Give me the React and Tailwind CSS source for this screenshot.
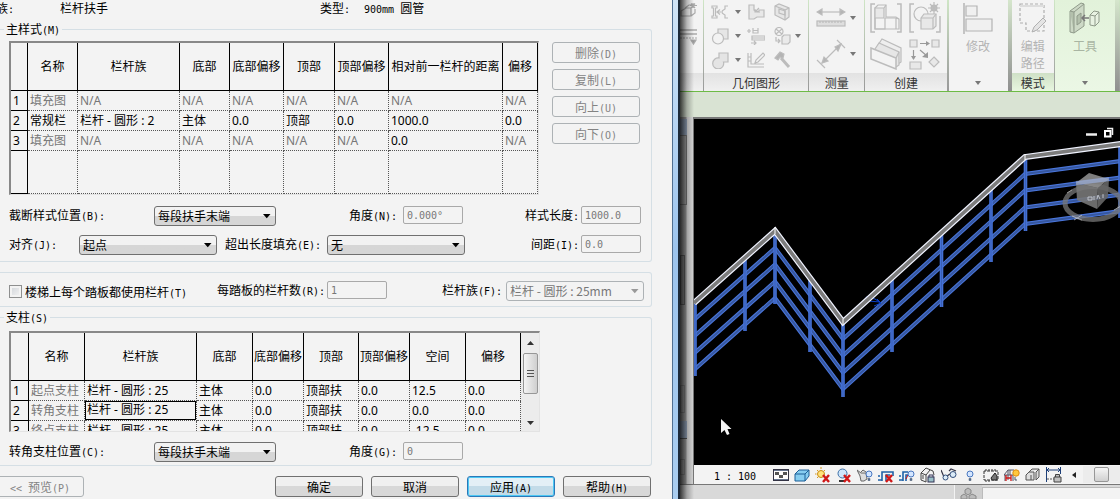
import { useState } from "react";

const balusterCols = [
  { title: "名称", width: "w-[50px]" },
  { title: "栏杆族", width: "w-[102px]" },
  { title: "底部", width: "w-[50px]" },
  { title: "底部偏移", width: "w-[54px]" },
  { title: "顶部", width: "w-[51px]" },
  { title: "顶部偏移", width: "w-[54px]" },
  { title: "相对前一栏杆的距离", width: "w-[114px]" },
  { title: "偏移", width: "w-[35px]" },
];

const balusterRows = [
  ["填充图", "N/A", "N/A", "N/A", "N/A", "N/A", "N/A", "N/A"],
  ["常规栏", "栏杆 - 圆形 : 2", "主体", "0.0", "顶部", "0.0", "1000.0", "0.0"],
  ["填充图", "N/A", "N/A", "N/A", "N/A", "N/A", "0.0", "N/A"],
];

const postCols = [
  { title: "名称", width: "w-[56px]" },
  { title: "栏杆族", width: "w-[112px]" },
  { title: "底部", width: "w-[56px]" },
  { title: "底部偏移", width: "w-[51px]" },
  { title: "顶部", width: "w-[55px]" },
  { title: "顶部偏移", width: "w-[51px]" },
  { title: "空间", width: "w-[56px]" },
  { title: "偏移", width: "w-[55px]" },
];

const postRows = [
  ["起点支柱", "栏杆 - 圆形 : 25", "主体", "0.0", "顶部扶", "0.0", "12.5", "0.0"],
  ["转角支柱", "栏杆 - 圆形 : 25", "主体", "0.0", "顶部扶", "0.0", "0.0", "0.0"],
  ["终点支柱", "栏杆 - 圆形 : 25", "主体", "0.0", "顶部扶", "0.0", "-12.5", "0.0"],
];

// Latin runs are set in a half-width mono face next to the 12px Chinese
function T({ children }) {
  return children.split(/([\x20-\x7e]+)/).map((part, i) =>
    i % 2 ? (
      <span key={i} className="font-['DejaVu_Sans_Mono',monospace] text-[10px] leading-[0] whitespace-pre">
        {part}
      </span>
    ) : (
      part
    )
  );
}

function Grid({ label, cols, rows, numWidth, muted, selected, filler }) {
  return (
    <table
      aria-label={label}
      className="table-fixed border-separate border-spacing-0 shrink-0 w-0 font-['Noto_Sans','Noto_Sans_CJK_SC',sans-serif] text-xs leading-4 text-black whitespace-nowrap"
    >
      <thead>
        <tr className="h-12">
          <td className={`${numWidth} border-r border-b border-black`}></td>
          {cols.map((c) => (
            <th key={c.title} scope="col" className={`${c.width} p-0 font-normal text-center border-r border-b border-black`}>
              {c.title}
            </th>
          ))}
        </tr>
      </thead>
      <tbody>
        {rows.map((row, r) => (
          <tr key={r} className="h-5">
            <th scope="row" className="p-0 pl-0.5 text-left font-normal border-r border-b border-black">
              {r + 1}
            </th>
            {row.map((text, c) => (
              <td
                key={c}
                className={`p-0 overflow-hidden border-r border-b border-dotted border-[#555] ${muted(text, c) ? "text-[#777]" : ""}`}
              >
                {selected === `${r}-${c}` ? (
                  <div className="h-[19px] pl-px border border-black">{text}</div>
                ) : (
                  <div className="pl-0.5">{text}</div>
                )}
              </td>
            ))}
          </tr>
        ))}
        {filler && (
          <tr className="h-[43px]">
            <td className="border-r border-b border-black"></td>
            {cols.map((c) => (
              <td key={c.title} className="border-r border-b border-dotted border-[#555]"></td>
            ))}
          </tr>
        )}
      </tbody>
    </table>
  );
}

function Select({ id, options, className, disabled, label }) {
  return (
    <div className={`relative ${className}`}>
      <select
        id={id}
        aria-label={label}
        disabled={disabled}
        className="appearance-none block w-full h-5 pl-[3px] pr-5 text-xs leading-4 rounded-[3px] border border-[#707070] text-black bg-linear-to-b from-[#f2f2f2] from-50% to-[#d6d6d6] to-50% disabled:border-[#adb2b5] disabled:text-[#777] disabled:bg-none disabled:bg-[#f3f3f3]"
      >
        {options.map((o) => (
          <option key={o}>{o}</option>
        ))}
      </select>
      <svg
        viewBox="0 0 8 5"
        className={`absolute right-[5px] top-2 w-2 h-[5px] pointer-events-none ${disabled ? "fill-[#999]" : "fill-black"}`}
      >
        <path d="M0 0H7.5L3.75 4.2Z" />
      </svg>
    </div>
  );
}

function Field({ id, value }) {
  return (
    <input
      id={id}
      type="text"
      disabled
      defaultValue={value}
      className="w-[60px] h-[18px] px-[3px] rounded-[2px] border border-[#a9a9a9] bg-[#f3f3f3] font-['DejaVu_Sans_Mono',monospace] text-[10px] leading-4 text-[#777]"
    />
  );
}

function Button({ children, disabled, primary, className = "" }) {
  const look = disabled
    ? "border-[#adb2b5] text-[#838383]"
    : primary
    ? "border-[#2c78b8] bg-linear-to-b from-[#e3eff6] from-50% to-[#c3dbe8] to-50% shadow-[inset_0_0_0_1px_#4cc8f4]"
    : "border-[#707070] bg-linear-to-b from-[#f0f0f0] from-50% to-[#d8d8d8] to-50%";
  return (
    <button
      type="button"
      disabled={disabled}
      className={`w-[88px] h-[21px] shrink-0 rounded-[3px] border text-xs leading-4 whitespace-nowrap ${look} ${className}`}
    >
      <T>{children}</T>
    </button>
  );
}

const group = "min-w-0 mr-5 border border-l-0 border-[#d5dfe5] rounded-r-[3px]";
const legend = "ml-1 px-0.5 text-xs leading-4";
const formRow = "flex pl-[9px] leading-[18px]";
const sunken = "ml-[9px] border-2 border-r border-b border-t-[#888] border-l-[#888] border-r-[#e3e3e3] border-b-[#e3e3e3]";

function BalusterDialog() {
  const [perTread, setPerTread] = useState(false);

  return (
    <form className="w-3/5 shrink-0 overflow-hidden bg-[#f3f3f3] text-black text-xs leading-4">
      <div className="flex h-[21px] overflow-hidden">
        <div className="w-[60px] -indent-1 shrink-0"><T>族:</T></div>
        <div className="w-[260px] shrink-0">栏杆扶手</div>
        <div className="w-11 shrink-0"><T>类型:</T></div>
        <div><T>900mm 圆管</T></div>
      </div>

      <fieldset className={`${group} pb-1.5`}>
        <legend className={legend}><T>主样式(M)</T></legend>
        <div className="flex pt-1">
          <div className={sunken}>
            <Grid
              label="主样式"
              cols={balusterCols}
              rows={balusterRows}
              numWidth="w-[17px]"
              muted={(text) => text === "N/A" || text === "填充图"}
              filler
            />
          </div>
          <div className="flex flex-col gap-1.5 ml-[13px] pt-px">
            <Button disabled>删除(D)</Button>
            <Button disabled>复制(L)</Button>
            <Button disabled>向上(U)</Button>
            <Button disabled>向下(O)</Button>
          </div>
        </div>
        <div className={`${formRow} mt-[11px]`}>
          <label htmlFor="break" className="w-[145px]"><T>截断样式位置(B):</T></label>
          <Select id="break" className="w-[122px]" options={["每段扶手末端", "角度大于", "从不"]} />
          <label htmlFor="angleN" className="w-[127px] pr-1.5 text-right"><T>角度(N):</T></label>
          <Field id="angleN" value="0.000°" />
          <label htmlFor="length" className="w-[118px] pr-0.5 text-right"><T>样式长度:</T></label>
          <Field id="length" value="1000.0" />
        </div>
        <div className={`${formRow} mt-[9px]`}>
          <label htmlFor="justify" className="w-[70px]"><T>对齐(J):</T></label>
          <Select id="justify" className="w-[138px]" options={["起点", "终点", "中心"]} />
          <label htmlFor="excess" className="w-[110px] pr-1.5 text-right"><T>超出长度填充(E):</T></label>
          <Select id="excess" className="w-[138px]" options={["无", "截断样式"]} />
          <label htmlFor="spacing" className="w-[116px] pr-0.5 text-right"><T>间距(I):</T></label>
          <Field id="spacing" value="0.0" />
        </div>
      </fieldset>

      <div className={`${group} ${formRow} mt-2.5 pt-2 pb-[5px]`}>
        <input
          id="perTread"
          type="checkbox"
          checked={perTread}
          onChange={(e) => setPerTread(e.target.checked)}
          className="appearance-none w-[13px] h-[13px] mt-1 border border-[#8e8f8f] bg-linear-to-br from-[#cfd3d8] to-[#f6f6f6] shadow-[inset_0_0_0_2px_#f3f3f3] checked:bg-none checked:bg-[#4b6a9b]"
        />
        <label htmlFor="perTread" className="w-[180px] ml-[3px] mt-0.5"><T>楼梯上每个踏板都使用栏杆(T)</T></label>
        <label htmlFor="count" className="w-[122px] pr-0.5 text-right"><T>每踏板的栏杆数(R):</T></label>
        <Field id="count" value="1" />
        <label htmlFor="family" className="w-[119px] pr-1 text-right"><T>栏杆族(F):</T></label>
        <Select id="family" disabled className="w-[138px]" options={["栏杆 - 圆形 : 25mm"]} />
      </div>

      <fieldset className={`${group} mt-0.5 pb-[3px]`}>
        <legend className={legend}><T>支柱(S)</T></legend>
        <div className="pt-1.5">
          <div className={`${sunken} flex h-[101px] w-[531px] overflow-hidden`}>
            <Grid
              label="支柱"
              cols={postCols}
              rows={postRows}
              numWidth="w-[18px]"
              muted={(text, c) => c === 0}
              selected="1-1"
            />
            <div className="flex flex-col items-center justify-between grow pl-px bg-[#ececec]">
              <svg viewBox="0 0 7 4" className="w-[7px] h-1 mt-2 fill-[#333]"><path d="M0 4H7L3.5 0Z" /></svg>
              <div className="flex flex-col items-center justify-center gap-0.5 w-[15px] h-[41px] -mt-5 rounded-[2px] border border-[#979797] bg-linear-to-r from-[#f4f4f4] to-[#cfcfcf]">
                <span className="w-[7px] h-px bg-[#555]"></span>
                <span className="w-[7px] h-px bg-[#555]"></span>
                <span className="w-[7px] h-px bg-[#555]"></span>
              </div>
              <svg viewBox="0 0 7 4" className="w-[7px] h-1 mb-1.5 fill-[#333]"><path d="M0 0H7L3.5 4Z" /></svg>
            </div>
          </div>
        </div>
        <div className={`${formRow} mt-2.5`}>
          <label htmlFor="corner" className="w-[145px]"><T>转角支柱位置(C):</T></label>
          <Select id="corner" className="w-[122px]" options={["每段扶手末端", "角度大于", "从不"]} />
          <label htmlFor="angleG" className="w-[127px] pr-1.5 text-right"><T>角度(G):</T></label>
          <Field id="angleG" value="0" />
        </div>
      </fieldset>

      <div className="flex justify-end gap-2 mt-2.5 pr-[21px]">
        <Button disabled className="-ml-1 mr-auto">{"<< 预览(P)"}</Button>
        <Button>确定</Button>
        <Button>取消</Button>
        <Button primary>应用(A)</Button>
        <Button>帮助(H)</Button>
      </div>
    </form>
  );
}

function Caret({ className = "" }) {
  return (
    <svg viewBox="0 0 6 4" className={`w-1.5 h-1 fill-[#777] ${className}`}>
      <path d="M0 0H6L3 4Z" />
    </svg>
  );
}

function Tool({ label, box, size, children }) {
  return (
    <button type="button" aria-label={label} className="flex items-center justify-center">
      <svg viewBox={box} className={size} fill="none" stroke="#bcbcbc" strokeWidth="1.2">
        {children}
      </svg>
    </button>
  );
}

function Panel({ title, className, titleClass = "bg-linear-to-b from-[#e2e2e2] to-[#f0f0f0]", children }) {
  return (
    <section className={`flex flex-col overflow-hidden ${className}`}>
      <div className="grow">{children}</div>
      <h2 className={`h-[18px] text-center text-xs leading-[19px] text-[#333] whitespace-nowrap ${titleClass}`}>{title}</h2>
    </section>
  );
}

const divider = "w-px shrink-0 bg-linear-to-b from-[#cfe6c6] to-[#999]";
const wideDivider = "w-1 shrink-0 bg-linear-to-b from-[#d5e6cc] to-[#8f8f8f]";

function Ribbon() {
  return (
    <div className="flex h-[92px] overflow-hidden border-b border-[#6dbb45] bg-[#f3f3f3]">
      <Panel title="" className="w-[23px] shrink-0">
        <svg viewBox="0 0 23 72" className="w-[23px] h-[72px]" fill="none" stroke="#aaa" strokeWidth="1.2">
          <path d="M1 11L6 8H11V16H1ZM5 8L9 5H14M11 16L15 13V9M13 3V8M10 5.500H17M11 3.500L15 8M15 3.500L11 8" />
          <path d="M0 30H17M0 34H17" strokeWidth="1.500" />
          <path d="M0 38H17" strokeDasharray="2 1" />
          <path d="M11 40H16L13.500 44Z" fill="#999" />
        </svg>
      </Panel>
      <div className={divider}></div>

      <Panel title="几何图形" className="w-[104px] grow">
        <div className="grid grid-cols-[18px_18px_18px_8px_18px_14px] auto-rows-[24px] items-center justify-items-center pl-[7px]">
          <Tool label="连接端切割" box="0 0 18 18" size="w-[18px] h-[18px]">
            <path d="M1 3H6V5H4.500V13H6V15H1V13H2.500V5H1ZM6 9H12M9 6.500L6 9L9 11.500M17 3H14V6L11 8M17 15H14V12L11 10" />
          </Tool>
          <Caret />
          <Tool label="连接" box="0 0 18 18" size="w-[18px] h-[18px]">
            <path d="M2 2H7V7L12 9V7H17V14H10L7 16H2Z" fill="#e8e8e8" />
            <path d="M12 5L8 9M11 9H8V6" />
          </Tool>
          <span></span>
          <Tool label="拆分面" box="0 0 18 18" size="w-[18px] h-[18px]">
            <path d="M2 3L6 1L16 5V14L12 17L2 12ZM6 6L12 8V12L6 10Z" fill="#e6e6e6" />
            <path d="M2 3L12 7V17M12 7L16 5" />
          </Tool>
          <span></span>

          <Tool label="剪切" box="0 0 18 18" size="w-[18px] h-[18px]">
            <path d="M7 7V2H17V12H12" fill="#e6e6e6" />
            <circle cx="7" cy="11.500" r="5.500" fill="#f3f3f3" />
          </Tool>
          <Caret />
          <Tool label="墙连接" box="0 0 18 18" size="w-[18px] h-[18px]">
            <path d="M0 4H4M2 2V6M6 1V6H11V1M6 3.500H11M5 9H18V13H5ZM5 11H18M4 16H9M7 14L9 16L7 18" />
          </Tool>
          <span></span>
          <Tool label="填色" box="0 0 18 18" size="w-[18px] h-[18px]">
            <circle cx="6" cy="4.500" r="4" />
            <path d="M3 2L9 7M9 2L3 7M3 10V14H6M5 12L7 14L5 16" />
            <path d="M9 10L11 8H17V15L15 17H9Z" fill="#eaeaea" />
          </Tool>
          <Caret />

          <Tool label="取消连接" box="0 0 18 18" size="w-[18px] h-[18px]">
            <path d="M8 7V2H17V11H12.500A5.500 5.500 0 1 1 8 7Z" fill="#e4e4e4" />
          </Tool>
          <Caret />
          <Tool label="梁柱连接" box="0 0 18 18" size="w-[18px] h-[18px]">
            <path d="M1 2V16H17M4 2V13H17M8 12L9 9L16 2L18 4L11 11ZM1 6H4M1 10H4" />
          </Tool>
          <span></span>
          <Tool label="拆除" box="0 0 18 18" size="w-[18px] h-[18px]">
            <path d="M2 7L7 1L11 3L10 7L7 6L5 9Z" fill="#b4b4b4" />
            <path d="M8 7L16 16" strokeWidth="3" />
          </Tool>
        </div>
      </Panel>
      <div className={divider}></div>

      <Panel title="测量" className="w-[55px] grow">
        <div className="grid grid-cols-[30px_14px] auto-rows-[36px] items-center pl-[7px] gap-x-1">
          <Tool label="测量" box="0 0 30 20" size="w-[30px] h-5">
            <path d="M2 4H28" />
            <path d="M6 1V7L1 4ZM24 1V7L29 4Z" fill="#b4b4b4" />
            <rect x="1" y="13" width="28" height="5" fill="#dedede" />
            <path d="M4 13V15M7 13V15M10 13V15M13 13V15M16 13V15M19 13V15M22 13V15M25 13V15" />
          </Tool>
          <Caret />
          <Tool label="尺寸标注" box="0 0 30 30" size="w-[30px] h-[30px]">
            <path d="M1 21L9 29M21 1L29 9M6 24L25 5" />
            <path d="M6 24L8 18L12 22ZM25 5L19 8L22 12Z" fill="#b4b4b4" />
          </Tool>
          <Caret />
        </div>
      </Panel>
      <div className={divider}></div>

      <Panel title="创建" className="w-[81px] grow">
        <div className="grid grid-cols-[32px_32px] auto-rows-[36px] items-center gap-x-[7px] pl-[5px]">
          <Tool label="创建组" box="0 0 32 32" size="w-8 h-8">
            <path d="M5 2H1V30H5M27 2H31V30H27" strokeWidth="1.500" />
            <path d="M5 6L8 3H16V15H26L29 17V27H5Z" fill="#f3f3f3" />
            <path d="M5 6H14V16H5ZM14 6L16 3" fill="#e8e8e8" />
            <path d="M5 16V27H15V16M15 16H26V27M26 16L29 17" />
          </Tool>
          <Tool label="创建类似实例" box="0 0 32 32" size="w-8 h-8">
            <path d="M5 2H1V30H5M27 30H31V14" strokeWidth="1.500" />
            <circle cx="12" cy="12" r="7" />
            <path d="M12 16L15 12H27V24L24 27H12Z" fill="#e8e8e8" />
            <path d="M12 16H24V27M24 16L27 12" />
            <circle cx="25" cy="6" r="2.500" strokeWidth="2" />
            <path d="M25 0V12M19 6H31M21 2L29 10M29 2L21 10" />
          </Tool>
          <Tool label="创建部件" box="0 0 32 32" size="w-8 h-8">
            <path d="M8 7L12 1L31 10V24L28 26" fill="#eee" />
            <path d="M5 11L9 5L29 14V27L26 29" fill="#e6e6e6" />
            <path d="M1 10L26 20V31L1 21Z" fill="#f3f3f3" strokeWidth="1.500" />
            <path d="M26 20L29 14" />
          </Tool>
          <Tool label="创建零件" box="0 0 32 32" size="w-8 h-8">
            <path d="M1 2H8V9H1ZM23 2H30V9H23ZM1 24H12V31H1ZM25 19L30 24L25 29L20 24Z" fill="#e8e8e8" />
            <path d="M11 5.500H20M4.500 12V21M11 12L18 18" stroke="#999" />
            <path d="M17 3V8L21 5.500ZM2 18H7L4.500 22ZM19 14V20L13 19Z" fill="#999" stroke="none" />
          </Tool>
        </div>
      </Panel>
      <div className={divider}></div>
      <div className={divider}></div>

      <button type="button" className="flex flex-col items-center w-[59px] grow pt-0.5 text-xs leading-[17px] text-[#b4b4b4]">
        <svg viewBox="0 0 32 33" className="w-8 h-[33px]" fill="none" stroke="#b4b4b4" strokeWidth="1.2">
          <path d="M2 1V32" strokeWidth="1.500" />
          <path d="M4 4H15V14H4ZM4 17H30V29H4Z" fill="#f0f0f0" />
        </svg>
        <span className="mt-0.5">修改</span>
        <Caret className="mt-auto mb-1.5" />
      </button>
      <div className={wideDivider}></div>

      <Panel title="模式" className="w-[42px] grow" titleClass="bg-linear-to-b from-[#cfe0c6] to-[#e8f6e0]">
        <button type="button" className="flex flex-col items-center w-full pt-0.5 text-xs leading-[17px] text-[#b4b4b4]">
          <svg viewBox="0 0 30 33" className="w-[30px] h-[33px]" fill="none" stroke="#b0b0b0">
            <path d="M2 2H26V29H8V21H2Z" strokeDasharray="3 2" strokeWidth="1.2" />
            <path d="M2 4H26" stroke="#ddd" strokeWidth="2" />
            <path d="M14 30L16 25L25 16L28 19L19 28Z" fill="#e4e4e4" />
          </svg>
          <span className="mt-0.5">编辑</span>
          <span>路径</span>
        </button>
      </Panel>
      <div className={divider}></div>

      <button type="button" className="flex flex-col items-center w-[60px] grow pt-0.5 bg-linear-to-b from-[#e2f2da] to-[#ebf7e5] text-xs leading-[17px] text-[#a9b5a3]">
        <svg viewBox="0 0 32 33" className="w-8 h-[33px]" fill="#cdd9c6" stroke="#8f9a8a">
          <path d="M1 9L12 1L15 2V24L5 31L1 30Z" />
          <path d="M1 9L5 10V31M5 10L15 2M8 14L12 11V20L8 23Z" fill="#b3c0ac" />
          <path d="M21 13L25 9L30 10V20L26 24L21 23ZM21 13L26 14V24M26 14L30 10" fill="#e8f2e2" />
          <path d="M13 16H20M16 13L13 16L16 19" fill="none" stroke="#777" strokeWidth="1.500" />
        </svg>
        <span className="mt-0.5">工具</span>
        <Caret className="mt-auto mb-1.5" />
      </button>
      <div className={wideDivider}></div>
      <div className={divider}></div>
    </div>
  );
}

const railTop = [
  [694, 303],
  [775, 231],
  [843, 322],
  [1025, 157],
  [1121, 144],
];
const railOffsets = [17, 33.5, 50.5, 67];
const railPosts = [
  [695, 303, 376],
  [745, 257, 331],
  [775, 231, 304],
  [810, 279, 352],
  [843, 322, 397],
  [892, 280, 352],
  [941.5, 234, 307],
  [991, 190, 262],
  [1025.5, 157, 231],
  [1120, 144, 218],
];

const toPoints = (dy) => railTop.map(([x, y]) => `${x},${y + dy}`).join(" ");

function Viewport() {
  return (
    <div className="grow bg-black overflow-hidden">
      <svg viewBox="694 119 426 346" preserveAspectRatio="xMinYMin slice" className="block w-full h-[346px]" fill="none">
        {railOffsets.map((dy) => (
          <g key={dy}>
            <polyline points={toPoints(dy)} stroke="#4a76dc" strokeWidth="4" />
            <polyline points={toPoints(dy)} stroke="#36579f" strokeWidth="2" />
          </g>
        ))}
        {railPosts.map(([x, y1, y2]) => (
          <g key={x}>
            <path d={`M${x} ${y1}V${y2}`} stroke="#4471d6" strokeWidth="3.600" />
            <path d={`M${x} ${y1}V${y2}`} stroke="#3a61b8" strokeWidth="1" />
          </g>
        ))}
        <path d="M866 297L875 299L881 303L874 306M866 297L868 301L880 302M877 299L881 303" stroke="#0a3fc8" />
        <polyline points={toPoints(0)} stroke="#f0f3ff" strokeWidth="6" />
        <polyline points={toPoints(0)} stroke="#7c7c7c" strokeWidth="3.600" />
        <path d="M775 227V234M843 319V325M1025 154V160" stroke="#fff" />

        <g opacity="0.75">
          <ellipse cx="1093" cy="203" rx="28" ry="16.500" stroke="#777" strokeWidth="5" />
          <path d="M1072 216L1082 220M1074 220L1082 215M1114 210L1121 206M1067 193L1072 190" stroke="#ccc" />
        </g>
        <g opacity="0.9">
          <path d="M1076 183L1089 173L1109 179L1098 188Z" fill="#8c8c8c" />
          <path d="M1076 183L1098 188L1097 209L1077 200Z" fill="#777" />
          <path d="M1098 188L1109 179L1108 197L1097 209Z" fill="#666" />
          <path d="M1076 183L1109 179" stroke="#a9bbe6" strokeWidth="4" opacity="0.6" />
          <path d="M1088 197H1092V200H1088ZM1094 196V200M1097 199L1098 195L1100 199M1103 198V194" stroke="#ccc" />
        </g>

        <path d="M1086 134.500H1097" stroke="#eee" strokeWidth="2.500" />
        <path d="M1107 128.500H1112.500V135" stroke="#eee" strokeWidth="1.500" />
        <rect x="1105" y="131" width="5.500" height="5.500" stroke="#fff" strokeWidth="2" />
        <path d="M721 419V433L724.500 430L727 435L729.500 434L727.500 429H731.500Z" fill="#f4f4f4" />
      </svg>
    </div>
  );
}

const redCross = <path d="M8 8L14 15M14 8L8 15" stroke="#d01818" strokeWidth="2.400" />;
const bulb = (
  <g>
    <circle cx="12" cy="7" r="3" fill="#d4e6ff" stroke="#4a78c0" />
    <path d="M11 11.500H13V13.500H11Z" fill="#5572a0" stroke="#456" strokeWidth="0.500" />
  </g>
);

const viewTools = [
  {
    name: "详细程度",
    art: (
      <g>
        <rect x="0.500" y="2.500" width="15" height="11" fill="#fff" stroke="#334" />
        <path d="M1 3.500H15M1 12.500H15" stroke="#66758f" />
        <path d="M2 5H6V8H2ZM10 5H14V8H10ZM6 8H10V11H6Z" fill="#555" stroke="none" />
      </g>
    ),
  },
  {
    name: "视觉样式",
    art: <path d="M1 7L5 3H15V9L11 14H1ZM1 7H11V14M11 7L15 3" fill="#86cdf0" stroke="#1c5f97" />,
  },
  {
    name: "日光路径",
    art: (
      <g>
        <circle cx="6" cy="7" r="3.500" fill="#ffe27a" stroke="#c98b12" />
        <path d="M6 0V2M0 7H1.500M2 3L3 4M10 3L9 4M2 11L3 10" stroke="#d79a20" />
        {redCross}
      </g>
    ),
  },
  {
    name: "阴影",
    art: (
      <g>
        <circle cx="6.500" cy="6.500" r="4.500" fill="#cfe6fa" stroke="#3c6fa8" />
        <path d="M3 14H9" stroke="#333" strokeWidth="2" />
        {redCross}
      </g>
    ),
  },
  {
    name: "渲染",
    art: (
      <g>
        <path d="M0 3L4 6H9L10 12L7 14H4L3 9ZM4 5L6 3L9 5" fill="#ddd" stroke="#666" />
        {bulb}
      </g>
    ),
  },
  {
    name: "裁剪视图",
    art: (
      <g>
        <path d="M4 14V5H15V9M0 13H4M0 9H2M8 14V8H12" stroke="#1e62a8" strokeWidth="1.600" />
        {redCross}
      </g>
    ),
  },
  {
    name: "显示裁剪区域",
    art: (
      <g>
        <path d="M4 14V5H9M0 13H4M0 9H2M7 14V8H9" stroke="#1e62a8" strokeWidth="1.600" />
        <path d="M7 12L9 8" stroke="#d01818" />
        {bulb}
      </g>
    ),
  },
  {
    name: "锁定三维视图",
    art: (
      <g>
        <path d="M1 6L6 1L13 4L14 8M1 6V13L6 15V8L1 6M6 8L10 3M3 8V12" stroke="#444" />
        <rect x="8" y="10" width="6" height="5" fill="#9ac0c8" stroke="#335" />
        <path d="M9 10V8H13V10" stroke="#335" />
      </g>
    ),
  },
  {
    name: "临时隐藏",
    art: (
      <g>
        <path d="M0 3L3 10M15 4L10 2L8 4M6 9L9 7" stroke="#334" strokeWidth="1.200" />
        <circle cx="4.500" cy="10.500" r="2.500" fill="#dcecf8" stroke="#334f7c" />
        <circle cx="12" cy="7.500" r="3" fill="#dcecf8" stroke="#334f7c" />
      </g>
    ),
  },
  { name: "显示隐藏图元", art: <g transform="translate(-4)">{bulb}</g> },
  {
    name: "临时视图属性",
    art: (
      <g>
        <path d="M1 4V13H15V4ZM3 2V4M6 2V4M9 2V4M12 2V4M3 13V15M6 13V15" stroke="#333" strokeDasharray="3 1" />
        <path d="M8 11L12 6L14 9V13H9Z" fill="#777" stroke="#222" />
      </g>
    ),
  },
  {
    name: "显示分析模型",
    art: (
      <g>
        <path d="M0 8L4 3H10M0 8H9M4 3V13M9 8V14M1 8V14M6 3V8" stroke="#556" />
        <path d="M2 8V14M7 8V14M2 11H7" stroke="#d01818" strokeWidth="1.300" />
        <circle cx="12" cy="6" r="3.200" fill="#ffc83c" stroke="#e08a10" />
        <path d="M11 10V13H13" stroke="#456" />
      </g>
    ),
  },
  {
    name: "高亮位移集",
    art: (
      <path d="M1 8L4 5H9V13H1ZM4 5L7 2H14L11 5V13L14 10V2M6 8V13" fill="#ddd" stroke="#555" />
    ),
  },
  {
    name: "显示约束",
    art: (
      <g>
        <path d="M0.500 0V15M14.500 0V7M1 3H14M3 1L1 3L3 5M12 1L14 3L12 5" stroke="#1d3f78" />
        <path d="M1 12H8" stroke="#555" strokeDasharray="2 1" />
        <path d="M8 10H15V15H8ZM9.500 10V7.500H13.500V10" fill="#c0c0c0" stroke="#444" />
      </g>
    ),
  },
];

function ViewBar() {
  return (
    <div className="flex items-center h-[19px] pl-5 bg-[#f3f3f3] text-black overflow-hidden">
      <div className="w-[59px] shrink-0 text-xs leading-4"><T>1 : 100</T></div>
      <div className="flex gap-[5px] shrink-0">
        {viewTools.map((t) => (
          <button key={t.name} type="button" aria-label={t.name}>
            <svg viewBox="0 0 16 16" className="block w-4 h-4" fill="none">
              {t.art}
            </svg>
          </button>
        ))}
      </div>
      <svg viewBox="0 0 4 6" className="w-1 h-1.5 ml-2.5 shrink-0 fill-[#222]"><path d="M4 0V6L0 3Z" /></svg>
      <div className="grow h-[17px] ml-[7px] pl-[11px] py-px bg-[#ececec]">
        <div className="w-[15px] h-[15px] rounded-[2px] border border-[#979797] bg-linear-to-b from-[#f5f5f5] to-[#d0d0d0]"></div>
      </div>
    </div>
  );
}

function DockEdge() {
  return (
    <div className="flex flex-col w-3.5 shrink-0 border-r border-[#777] bg-linear-to-r from-[#a3a3a3] from-45% to-[#d8d8d8] to-55%">
      <div className="w-[7px] h-4 mt-0.5 bg-[#93a2b8]"></div>
      <div className="w-[7px] h-[70px] border-t border-r border-b border-[#777]"></div>
      <div className="w-[5px] h-[50px] mt-[50px] border border-[#666] bg-[#909090]"></div>
      <div className="w-[5px] h-7 mt-20 border border-[#888]"></div>
      <div className="w-[7px] h-[18px] mt-2 bg-[#93a2b8] border-b border-[#555]"></div>
      <div className="w-[5px] h-4 mt-5 border border-[#888]"></div>
    </div>
  );
}

function RevitWindow() {
  return (
    <div className="relative flex flex-col grow min-w-0 bg-[#d6d6d6] text-black">
      <Ribbon />
      <div className="h-[25px] shrink-0 bg-[#d9e3d3]"></div>
      <div className="flex grow">
        <DockEdge />
        <div className="flex flex-col grow min-w-0 border-t-2 border-[#777]">
          <Viewport />
          <ViewBar />
        </div>
      </div>
      <div className="flex h-[15px] border-t border-[#777] bg-[#d9d9d9]">
        <div className="w-[275px] border-r border-[#f3f3f3]"></div>
        <div className="w-[27px] bg-[#cfcfcf]">
          <svg viewBox="0 0 18 12" className="w-[18px] h-3 mt-0.5 ml-[5px]" fill="#bbb" stroke="#888">
            <path d="M5 3L8 1L11 3V6L8 8L5 6ZM1 9L4 7L7 9V12H1ZM9 9L12 7L16 9V12H9Z" />
          </svg>
        </div>
        <div className="grow mt-0.5 border-t border-l border-[#bbb] bg-[#f3f3f3]"></div>
      </div>
      <div className="absolute inset-y-0 left-0 w-3.5 bg-linear-to-r from-black/75 via-black/25 to-transparent pointer-events-none"></div>
    </div>
  );
}

export default function App() {
  return (
    <main className="flex min-h-screen overflow-hidden font-['Noto_Sans_CJK_SC',sans-serif]">
      <BalusterDialog />
      <div className="w-2 shrink-0 border-l border-r-2 border-l-[#4f6f92] border-r-[#1c2a3a] bg-linear-to-b from-[#cfe4f7] via-[#9cc4ee] to-[#a9cdf0]"></div>
      <RevitWindow />
    </main>
  );
}
